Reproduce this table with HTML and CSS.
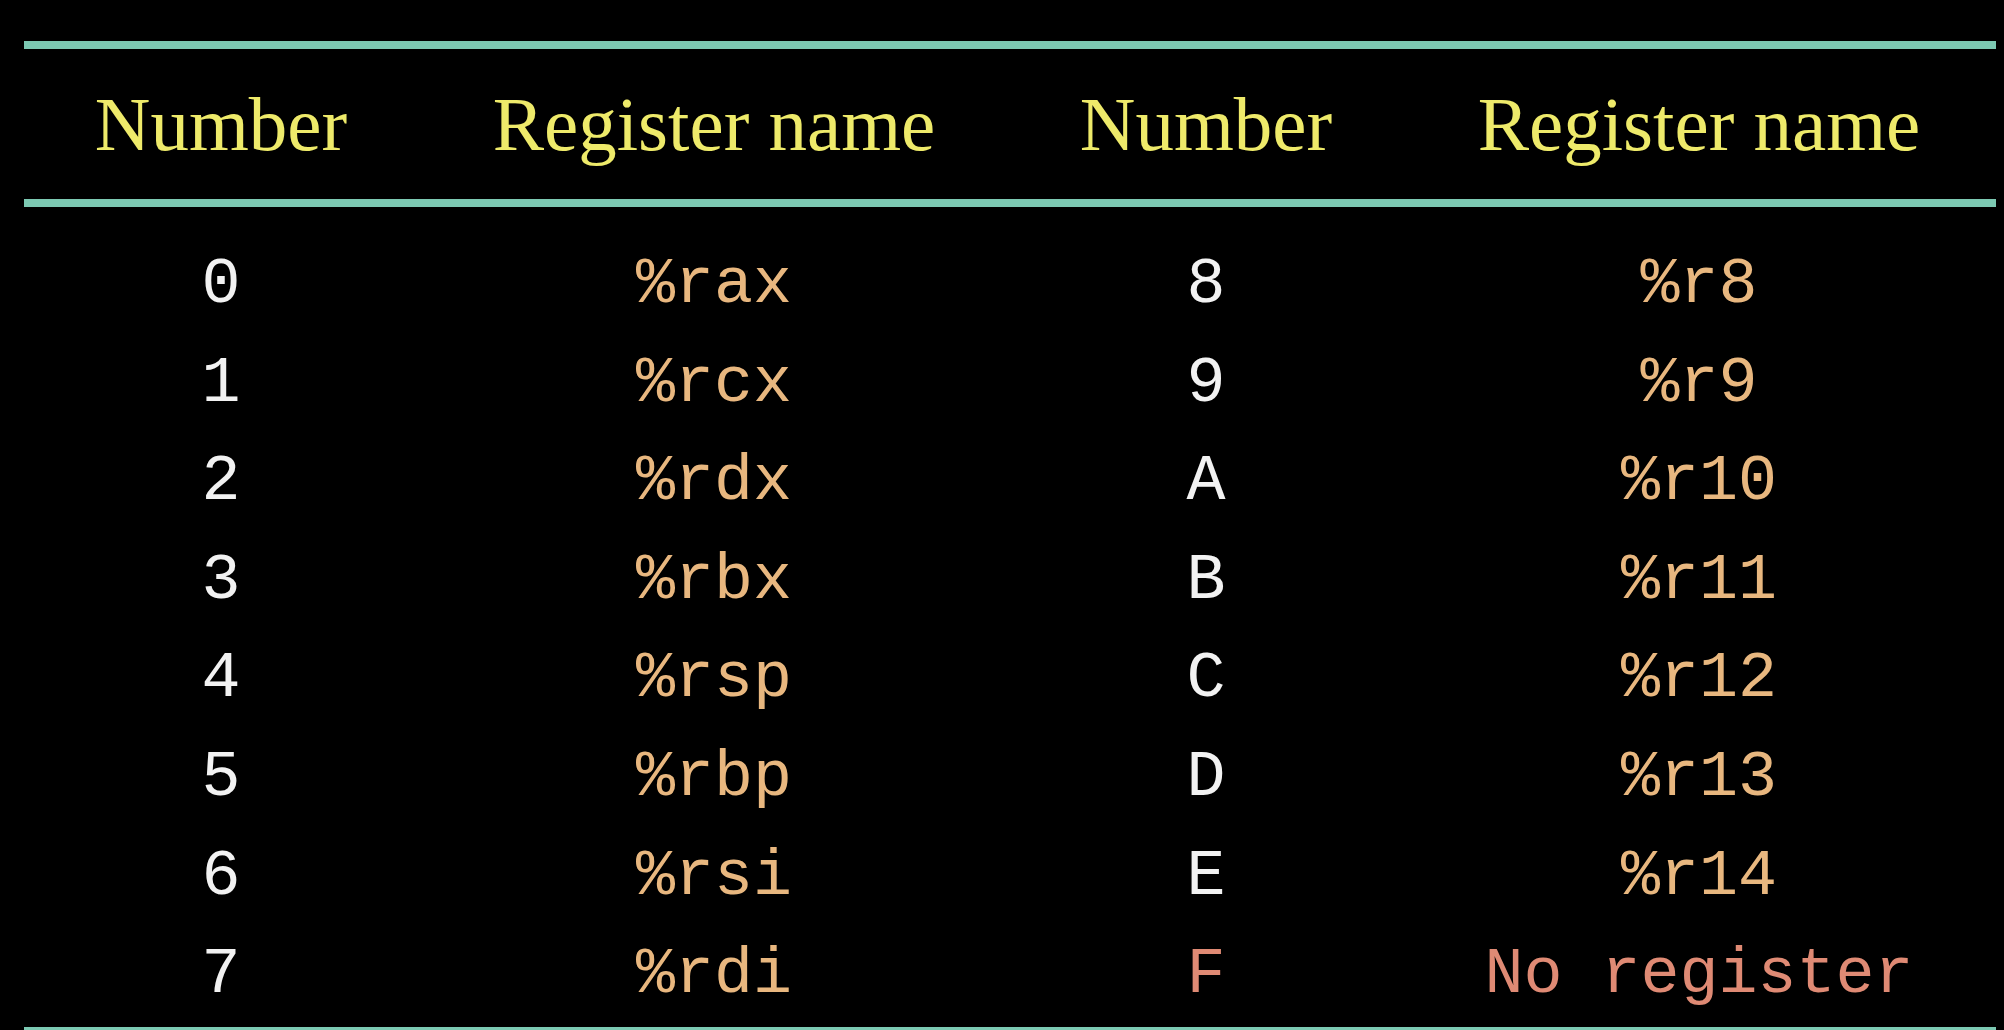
FILE: index.html
```html
<!DOCTYPE html>
<html lang="en">
<head>
<meta charset="utf-8">
<title>Register numbers</title>
<link rel="stylesheet" href="styles.css">
</head>
<body>
<div class="table">
  <div class="row head">
    <div class="cell">Number</div>
    <div class="cell">Register name</div>
    <div class="cell">Number</div>
    <div class="cell">Register name</div>
  </div>
  <div class="body">
    <div class="row"><div class="cell num">0</div><div class="cell reg">%rax</div><div class="cell num">8</div><div class="cell reg">%r8</div></div>
    <div class="row"><div class="cell num">1</div><div class="cell reg">%rcx</div><div class="cell num">9</div><div class="cell reg">%r9</div></div>
    <div class="row"><div class="cell num">2</div><div class="cell reg">%rdx</div><div class="cell num">A</div><div class="cell reg">%r10</div></div>
    <div class="row"><div class="cell num">3</div><div class="cell reg">%rbx</div><div class="cell num">B</div><div class="cell reg">%r11</div></div>
    <div class="row"><div class="cell num">4</div><div class="cell reg">%rsp</div><div class="cell num">C</div><div class="cell reg">%r12</div></div>
    <div class="row"><div class="cell num">5</div><div class="cell reg">%rbp</div><div class="cell num">D</div><div class="cell reg">%r13</div></div>
    <div class="row"><div class="cell num">6</div><div class="cell reg">%rsi</div><div class="cell num">E</div><div class="cell reg">%r14</div></div>
    <div class="row"><div class="cell num">7</div><div class="cell reg">%rdi</div><div class="cell num none">F</div><div class="cell reg none">No register</div></div>
  </div>
</div>
</body>
</html>
```
FILE: styles.css
```css
html, body {
  margin: 0;
  padding: 0;
  background: #000;
}

body {
  width: 2004px;
  height: 1030px;
  overflow: hidden;
}

.table {
  margin: 41px 0 0 24px;
  width: 1972px;
  border-top: 8px solid #7cc9b2;
  border-bottom: 8px solid #7cc9b2;
}

.row {
  display: grid;
  grid-template-columns: 394px 592px 392px 594px;
}

.cell {
  text-align: center;
  white-space: pre;
}

.head {
  height: 150px;
  border-bottom: 8px solid #7cc9b2;
  font-family: "Liberation Serif", "DejaVu Serif", serif;
  font-size: 77px;
  line-height: 150px;
  color: #eeea6a;
}

.body {
  padding: 29px 0 2px;
  font-family: "Liberation Mono", "DejaVu Sans Mono", monospace;
  font-size: 65px;
}

.body .row {
  height: 98.6px;
  line-height: 98.6px;
}

.num {
  color: #f2f2f2;
}

.reg {
  color: #e8b77f;
}

.none {
  color: #df8a74;
}
```
